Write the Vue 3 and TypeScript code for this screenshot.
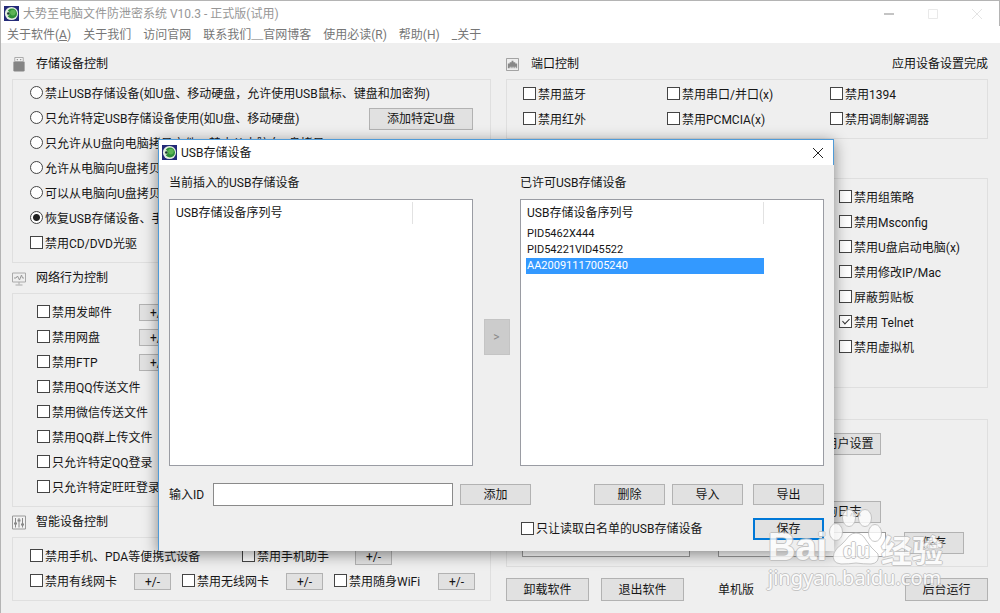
<script setup lang="ts">
import { ref } from 'vue'

interface Choice {
  label: string
  button?: string
}

interface Tick {
  label: string
  checked?: boolean
}

const storageModes: Choice[] = [
  { label: '禁止USB存储设备(如U盘、移动硬盘，允许使用USB鼠标、键盘和加密狗)' },
  { label: '只允许特定USB存储设备使用(如U盘、移动硬盘)', button: '添加特定U盘' },
  { label: '只允许从U盘向电脑拷贝文件，禁止从电脑向U盘拷贝' },
  { label: '允许从电脑向U盘拷贝' },
  { label: '可以从电脑向U盘拷贝' },
  { label: '恢复USB存储设备、手' },
]
const storageMode = ref(5)

const networkTicks: Choice[] = [
  { label: '禁用发邮件', button: '+/-' },
  { label: '禁用网盘', button: '+/-' },
  { label: '禁用FTP', button: '+/-' },
  { label: '禁用QQ传送文件' },
  { label: '禁用微信传送文件' },
  { label: '禁用QQ群上传文件' },
  { label: '只允许特定QQ登录' },
  { label: '只允许特定旺旺登录' },
]

const portTicks: Tick[] = [
  { label: '禁用蓝牙' },
  { label: '禁用串口/并口(x)' },
  { label: '禁用1394' },
  { label: '禁用红外' },
  { label: '禁用PCMCIA(x)' },
  { label: '禁用调制解调器' },
]

const systemTicks: Tick[] = [
  { label: '禁用组策略' },
  { label: '禁用Msconfig' },
  { label: '禁用U盘启动电脑(x)' },
  { label: '禁用修改IP/Mac' },
  { label: '屏蔽剪贴板' },
  { label: '禁用 Telnet', checked: true },
  { label: '禁用虚拟机' },
]

const allowed = ['PID5462X444', 'PID54221VID45522', 'AA20091117005240']
const selected = ref(2)
const address = ref('.     .')
</script>

<template>
  <div class="window">
    <header class="titlebar">
      <svg class="logo" viewBox="0 0 16 16" aria-hidden="true">
        <rect width="16" height="16" fill="#232a78" />
        <circle cx="8" cy="8" r="7" fill="#e6f0e4" />
        <circle cx="8.5" cy="8" r="5.4" fill="#2f9038" />
        <circle cx="9.5" cy="7" r="3" fill="#5cb455" />
        <path d="M3 5.5Q6 5 6 8T3 10.5" fill="#dcebd8" />
        <circle cx="4.6" cy="8" r="1.4" fill="#173a2a" />
      </svg>
      <h1>大势至电脑文件防泄密系统 V10.3 - 正式版(试用)</h1>
      <div class="controls">
        <button aria-label="最小化"><svg viewBox="0 0 10 10"><path d="M0 5H10" stroke="#c4c4c4" stroke-width="2" /></svg></button>
        <button aria-label="最大化"><svg viewBox="0 0 10 10"><path d="M.5.5H9.5V9.5H.5Z" fill="none" stroke="#e9e9e9" /></svg></button>
        <button aria-label="关闭"><svg viewBox="0 0 10 10"><path d="M0 0L10 10M10 0L0 10" stroke="#e4e4e4" /></svg></button>
      </div>
    </header>
    <nav class="menubar">
      <a href="#">关于软件(<u>A</u>)</a>
      <a href="#">关于我们</a>
      <a href="#">访问官网</a>
      <a href="#">联系我们＿官网博客</a>
      <a href="#">使用必读(R)</a>
      <a href="#">帮助(H)</a>
      <a href="#">_关于</a>
    </nav>

    <main class="columns">
      <section class="left">
        <h2>
          <svg class="icon" viewBox="0 0 14 16"><path d="M2.5.5H11.500V5H2.500Z" fill="#f4f4f4" stroke="#a5a5a5" /><path d="M4.500 2H6V3.500H4.500ZM8 2H9.500V3.500H8Z" fill="#999" /><path d="M1 5H13V14Q13 15.500 11.500 15.500H2.500Q1 15.500 1 14Z" fill="#858585" /></svg>
          存储设备控制
        </h2>
        <div class="group">
          <div v-for="(mode, i) in storageModes" :key="i" class="row">
            <label><input v-model="storageMode" type="radio" name="storage" :value="i" />{{ mode.label }}</label>
            <button v-if="mode.button" class="btn wide">{{ mode.button }}</button>
          </div>
          <div class="row"><label><input type="checkbox" />禁用CD/DVD光驱</label></div>
        </div>

        <h2>
          <svg class="icon" viewBox="0 0 14 14"><path d="M.5 1.500H13.500V10.500H.5ZM7 10.500V13M3.500 13.500H10.500" fill="none" stroke="#aaa" /><path d="M2 6.500H4L5.500 4.500L7.500 8.500L9.500 3.500L10.500 6.500H12" fill="none" stroke="#999" /></svg>
          网络行为控制
        </h2>
        <div class="group network">
          <div v-for="item in networkTicks" :key="item.label" class="row">
            <label><input type="checkbox" />{{ item.label }}</label>
            <button v-if="item.button" class="btn mini">{{ item.button }}</button>
          </div>
        </div>

        <h2>
          <svg class="icon" viewBox="0 0 14 14"><path d="M.5.5H13.500V13.500H.5Z" fill="#f2f2f2" stroke="#999" /><path d="M3.500 2.500V12M7 2.500V12M10.500 2.500V12" stroke="#888" /><path d="M2 7H5V9H2ZM5.500 4H8.500V6H5.500ZM9 8H12V10H9Z" fill="#888" /></svg>
          智能设备控制
        </h2>
        <div class="group smart">
          <div class="row pair">
            <label><input type="checkbox" />禁用手机、PDA等便携式设备</label>
            <div class="cell"><label><input type="checkbox" />禁用手机助手</label><button class="btn mini">+/-</button></div>
          </div>
          <div class="row triple">
            <div class="cell"><label><input type="checkbox" />禁用有线网卡</label><button class="btn mini">+/-</button></div>
            <div class="cell"><label><input type="checkbox" />禁用无线网卡</label><button class="btn mini">+/-</button></div>
            <div class="cell"><label><input type="checkbox" />禁用随身WiFi</label><button class="btn mini">+/-</button></div>
          </div>
        </div>
      </section>

      <section class="right">
        <h2>
          <svg class="icon" viewBox="0 0 14 14"><path d="M.5.5H13.500V13.500H.5Z" fill="#eee" stroke="#999" /><path d="M2 6H4V4.500H6V3H8V4.500H10V6H12V11H11V9.500H10V11H9V9.500H8V11H7V9.500H6V11H5V9.500H4V11H2Z" fill="#888" /></svg>
          端口控制
          <span class="status">应用设备设置完成</span>
        </h2>
        <div class="group ports">
          <label v-for="item in portTicks" :key="item.label"><input type="checkbox" />{{ item.label }}</label>
        </div>
        <div class="group system">
          <div v-for="item in systemTicks" :key="item.label" class="row">
            <label><input type="checkbox" :checked="item.checked" />{{ item.label }}</label>
          </div>
        </div>
        <div class="group account">
          <button class="btn tool">添加用户设置</button>
          <button class="btn tool">查询日志</button>
          <div class="fields">
            <input type="text" aria-label="名称" />
            <input v-model="address" class="address" type="text" aria-label="地址" />
            <button class="btn">保存</button>
          </div>
        </div>
        <footer class="actions">
          <button class="btn">卸载软件</button>
          <button class="btn">退出软件</button>
          <span>单机版</span>
          <button class="btn last">后台运行</button>
        </footer>
      </section>
    </main>

    <div class="dialog" role="dialog" aria-labelledby="dialog-title">
      <header class="dialog-bar">
        <svg class="logo" viewBox="0 0 16 16" aria-hidden="true">
          <rect width="16" height="16" fill="#232a78" />
          <circle cx="8" cy="8" r="7" fill="#e6f0e4" />
          <circle cx="8.5" cy="8" r="5.4" fill="#2f9038" />
          <circle cx="9.5" cy="7" r="3" fill="#5cb455" />
          <path d="M3 5.5Q6 5 6 8T3 10.5" fill="#dcebd8" />
          <circle cx="4.6" cy="8" r="1.4" fill="#173a2a" />
        </svg>
        <span id="dialog-title">USB存储设备</span>
        <button aria-label="关闭"><svg viewBox="0 0 10 10"><path d="M0 0L10 10M10 0L0 10" stroke="#222" /></svg></button>
      </header>
      <div class="dialog-body">
        <div class="lists">
          <div class="list-col">
            <h3>当前插入的USB存储设备</h3>
            <div class="list">
              <table>
                <thead><tr><th>USB存储设备序列号</th></tr></thead>
              </table>
            </div>
          </div>
          <button class="move" aria-label="移到已许可">&gt;</button>
          <div class="list-col">
            <h3>已许可USB存储设备</h3>
            <div class="list">
              <table>
                <thead><tr><th>USB存储设备序列号</th></tr></thead>
                <tbody>
                  <tr v-for="(id, i) in allowed" :key="id" :class="{ selected: i === selected }" @click="selected = i">
                    <td>{{ id }}</td>
                  </tr>
                </tbody>
              </table>
            </div>
          </div>
        </div>
        <div class="entry">
          <label for="device-id">输入ID</label>
          <input id="device-id" type="text" />
          <button class="btn">添加</button>
          <button class="btn remove">删除</button>
          <button class="btn">导入</button>
          <button class="btn export">导出</button>
        </div>
        <div class="confirm">
          <label><input type="checkbox" />只让读取白名单的USB存储设备</label>
          <button class="btn primary">保存</button>
        </div>
      </div>
    </div>

    <div class="watermark">
      <div class="brand">
        <span class="bai">Bai</span>
        <span class="paw">
          <svg viewBox="0 0 56 56" aria-hidden="true">
            <g fill="#fff" stroke="#bbb" stroke-width="1">
              <ellipse cx="7" cy="23" rx="6.500" ry="8.500" />
              <ellipse cx="20" cy="9" rx="6.500" ry="8.500" />
              <ellipse cx="36" cy="9" rx="6.500" ry="8.500" />
              <ellipse cx="46" cy="24" rx="6.500" ry="8.500" />
              <path d="M27 24Q33 24 37 31T49 45Q51 54 42 55Q34 55 27 54Q20 55 12 55Q2 54 5 44Q7 39 13 35Q17 31 20 27Q23 24 27 24Z" />
            </g>
          </svg>
          <span class="du">du</span>
        </span>
        <span class="jing">经验</span>
      </div>
      <div class="site">jingyan.baidu.com</div>
    </div>
  </div>
</template>

<style>
body {
  margin: 0;
}
</style>

<style scoped>
* {
  box-sizing: border-box;
}
.window {
  position: relative;
  min-height: 100vh;
  overflow: hidden;
  background: #efefef;
  border-top: 1px solid #b4b4b4;
  border-left: 1px solid #b4b4b4;
  color: #161616;
  font: 12px/16px Roboto, "Noto Sans CJK SC", sans-serif;
}
button,
input {
  font: inherit;
  color: inherit;
}
h1,
h2,
h3 {
  margin: 0;
  font-size: 12px;
  font-weight: 400;
}
.titlebar {
  display: flex;
  align-items: center;
  height: 25px;
  padding: 0 17px 0 3px;
  background: #fff;
  border-right: 1px solid #b4b4b4;
}
.logo {
  flex: none;
  width: 15px;
  height: 15px;
}
h1 {
  margin-left: 4px;
  color: #979797;
}
.controls {
  display: flex;
  gap: 34px;
  margin-left: auto;
}
.controls button,
.dialog-bar button {
  display: flex;
  padding: 0;
  border: 0;
  background: none;
}
.controls svg,
.dialog-bar button svg {
  width: 10px;
  height: 10px;
}
.menubar {
  display: flex;
  gap: 12px;
  height: 17px;
  padding-left: 6px;
  background: #fff;
  line-height: 18px;
}
.menubar a {
  color: #767676;
  text-decoration: none;
  white-space: nowrap;
}
.columns {
  display: grid;
  grid-template-columns: minmax(0, 479fr) minmax(0, 482fr);
  gap: 15px;
  padding: 6px 12px 12px 11px;
}
h2 {
  display: flex;
  align-items: center;
  height: 30px;
  color: #111;
}
.icon {
  width: 14px;
  height: 15px;
  margin-right: 10px;
}
.right .icon {
  width: 13px;
  height: 13px;
  margin-right: 12px;
}
.status {
  margin-left: auto;
}
.group {
  padding: 1px 17px 6px;
  border: 1px solid #dfdfdf;
}
.row {
  display: flex;
  align-items: center;
  height: 25px;
}
label {
  display: flex;
  align-items: center;
  white-space: nowrap;
}
input[type="radio"],
input[type="checkbox"] {
  position: relative;
  flex: none;
  appearance: none;
  width: 13px;
  height: 13px;
  margin: 0 2px 2px 0;
  border: 1px solid #444;
  background: #fff;
}
input[type="radio"] {
  border-radius: 50%;
}
input[type="radio"]:checked {
  background: radial-gradient(circle, #222 3px, #fff 4px);
}
input[type="checkbox"]:checked::after {
  content: "";
  position: absolute;
  left: 4px;
  top: 1px;
  width: 3px;
  height: 6px;
  border: solid #333;
  border-width: 0 1px 1px 0;
  transform: rotate(45deg);
}
.btn {
  padding: 0;
  border: 1px solid #b2b2b2;
  background: #e1e1e1;
  white-space: nowrap;
  text-align: center;
}
.btn.wide {
  width: 104px;
  height: 22px;
  margin-left: auto;
}
.btn.mini {
  flex: none;
  width: 37px;
  height: 17px;
  line-height: 14px;
}
.network {
  padding: 6px 24px;
}
.network label {
  width: 102px;
}
.smart {
  padding: 6px 15px 6px 17px;
}
.pair > label {
  width: 212px;
}
.pair .cell label {
  width: 113px;
}
.cell {
  display: flex;
  align-items: center;
}
.triple {
  justify-content: space-between;
}
.triple .cell label {
  width: 104px;
}
.ports {
  display: grid;
  grid-template-columns: 144fr 163fr 141fr;
  grid-auto-rows: 25px;
  padding: 2px 16px 6px;
}
.system {
  display: grid;
  justify-content: end;
  grid-template-columns: 133px;
  margin-top: 39px;
  padding: 6px 15px 27px;
}
.account {
  display: flex;
  flex-direction: column;
  align-items: flex-end;
  margin-top: 31px;
  padding: 13px 23px 9px 15px;
}
.tool {
  width: 87px;
  height: 22px;
  margin-right: 83px;
}
.tool + .tool {
  margin-top: 46px;
}
.fields {
  display: flex;
  align-self: stretch;
  gap: 28px;
  height: 25px;
  margin-top: 9px;
}
.fields input {
  min-width: 0;
  flex: 1;
  border: 1px solid #9a9a9a;
  background: #fff;
}
.fields .address {
  text-indent: 126px;
}
.fields .btn {
  width: 60px;
  height: 22px;
  margin-left: -10px;
}
.actions {
  display: flex;
  align-items: center;
  gap: 12px;
  margin-top: 11px;
}
.actions .btn {
  width: 83px;
  height: 23px;
}
.actions span {
  margin-left: 22px;
}
.actions .last {
  margin-left: auto;
}
.dialog {
  position: absolute;
  left: 157px;
  top: 138px;
  width: 676px;
  background: #efefef;
  border: 1px solid #4f9bd8;
  border-right: 0;
  border-bottom: 0;
  box-shadow: 0 3px 14px rgba(0, 0, 0, 0.45);
}
.dialog-bar {
  display: flex;
  align-items: center;
  height: 25px;
  padding: 0 10px 0 3px;
  background: #fff;
  border-right: 1px solid #4f9bd8;
}
.dialog-bar span {
  margin-left: 4px;
}
.dialog-bar button {
  margin-left: auto;
}
.dialog-body {
  padding: 10px 10px 11px;
}
.lists {
  display: flex;
  justify-content: space-between;
}
h3 {
  line-height: 16px;
  margin-bottom: 8px;
}
.list {
  width: 304px;
  height: 267px;
  padding: 2px 5px;
  border: 1px solid #9a9ca3;
  background: #fff;
}
table {
  width: 238px;
  border-collapse: collapse;
}
th {
  height: 22px;
  padding: 0 1px;
  border-right: 1px solid #e2e2e2;
  font-weight: 400;
  text-align: left;
}
tbody::before {
  content: "";
  display: block;
  height: 2px;
}
td {
  height: 16px;
  padding: 0 1px;
  font-size: 11px;
  line-height: 16px;
}
.selected {
  background: #3399ff;
  color: #fff;
}
.move {
  align-self: flex-end;
  width: 26px;
  height: 36px;
  margin-bottom: 111px;
  padding: 0;
  border: 1px solid #c4c4c4;
  background: #ccc;
  color: #8a8a8a;
}
.entry {
  display: flex;
  align-items: center;
  margin-top: 17px;
}
.entry label {
  width: 44px;
}
.entry input {
  width: 240px;
  height: 23px;
  padding: 0 4px;
  border: 1px solid #8a8a8a;
  background: #fff;
}
.entry .btn {
  width: 71px;
  height: 21px;
  margin-left: 7px;
}
.entry .remove {
  margin-left: auto;
}
.entry .export {
  margin-left: 10px;
}
.confirm {
  display: flex;
  align-items: center;
  justify-content: space-between;
  margin-top: 12px;
  padding-left: 352px;
}
.primary {
  width: 71px;
  height: 22px;
  border: 2px solid #0078d7;
}
.watermark {
  position: absolute;
  left: 767px;
  top: 506px;
  color: #fff;
  opacity: 0.8;
  pointer-events: none;
  text-shadow: 1px 0 #bbb, -1px 0 #bbb, 0 1px #bbb, 0 -1px #bbb;
}
.brand {
  display: flex;
  align-items: flex-end;
  height: 58px;
}
.bai {
  width: 61px;
  font: bold 38px/36px "Liberation Sans", sans-serif;
}
.paw {
  display: grid;
  width: 52px;
  height: 56px;
}
.paw svg,
.du {
  grid-area: 1 / 1;
}
.paw svg {
  width: 56px;
  height: 56px;
}
.du {
  position: relative;
  align-self: end;
  padding: 0 0 3px 14px;
  font: bold 22px/22px "Liberation Sans", sans-serif;
}
.jing {
  font: bold 31px/32px "Noto Sans CJK SC", sans-serif;
}
.site {
  font: 20px/26px "Noto Sans", sans-serif;
}
</style>
